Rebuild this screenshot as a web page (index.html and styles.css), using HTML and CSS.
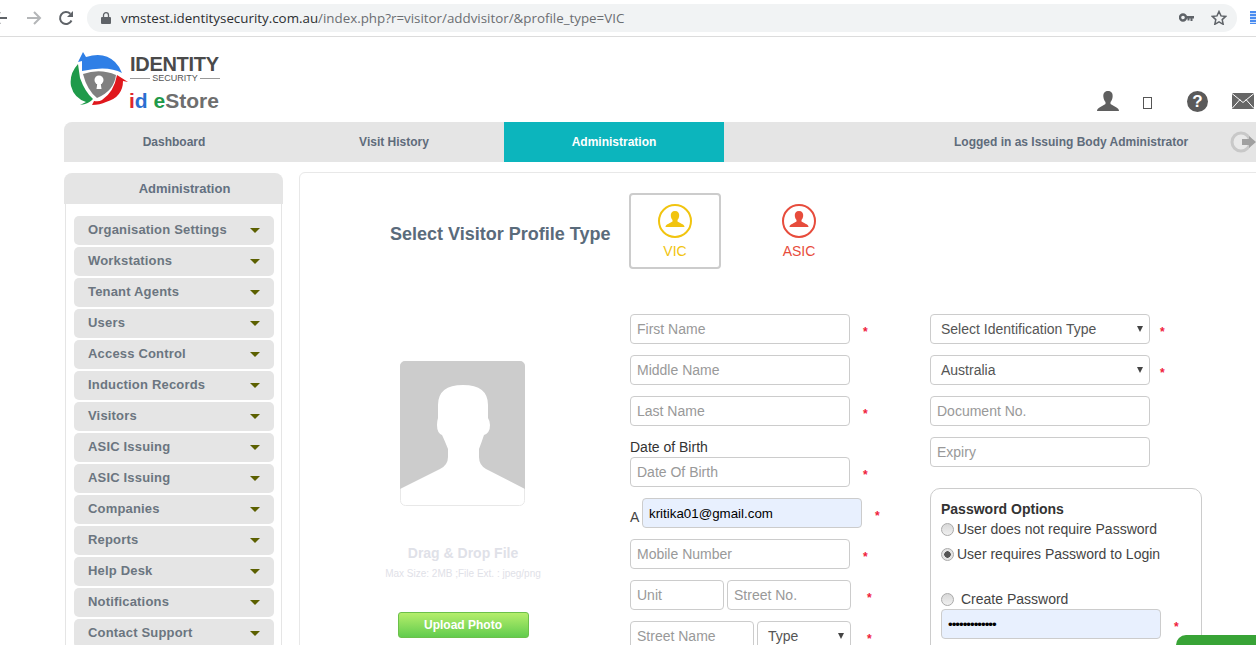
FILE: index.html
```html
<!DOCTYPE html>
<html lang="en">
<head>
  <meta charset="UTF-8">
  <title>Add Visitor</title>
  <link rel="stylesheet" href="styles.css">
</head>
<body>
  <div class="browser-bar">
    <svg class="chrome-icon back" width="16" height="16" viewBox="0 0 16 16"><path d="M15 8H2M8 2L2 8l6 6" fill="none" stroke="#5f6368" stroke-width="2"/></svg>
    <svg class="chrome-icon forward" width="16" height="16" viewBox="0 0 16 16"><path d="M1 8h13M8 2l6 6-6 6" fill="none" stroke="#b4b6b8" stroke-width="2"/></svg>
    <svg class="chrome-icon reload" width="16" height="16" viewBox="0 0 16 16"><path d="M13.500 10.500A6 6 0 1 1 12.300 3.800" fill="none" stroke="#5f6368" stroke-width="2"/><path d="M15 1v6H9z" fill="#5f6368"/></svg>
    <div class="address">
      <svg width="10" height="12" viewBox="0 0 10 12"><path d="M1 5h8a1 1 0 0 1 1 1v5a1 1 0 0 1-1 1H1a1 1 0 0 1-1-1V6a1 1 0 0 1 1-1z" fill="#5f6368"/><path d="M2.500 5V3.200a2.500 2.500 0 0 1 5 0V5" fill="none" stroke="#5f6368" stroke-width="1.300"/></svg>
      <span class="url"><span class="host">vmstest.identitysecurity.com.au</span>/index.php?r=visitor/addvisitor/&amp;profile_type=VIC</span>
      <svg class="key" width="15" height="9" viewBox="0 0 15 9"><circle cx="4" cy="4.500" r="3" fill="none" stroke="#5f6368" stroke-width="2.400"/><path d="M7 3h8v2.500h-1.500V8h-2V5.500h-1V7.500H8.500v-2H7z" fill="#5f6368"/></svg>
      <svg class="star" width="16" height="15" viewBox="0 0 16 15"><path d="M8 1.500l2 4.400 4.700.5-3.500 3.200 1 4.700L8 11.900l-4.200 2.400 1-4.700L1.300 6.400 6 5.900z" fill="none" stroke="#5f6368" stroke-width="1.500"/></svg>
    </div>
    <div class="ext-icon"></div>
  </div>

  <div class="page">
    <header class="top">
      <div class="logo">
        <svg class="logo-mark" width="60" height="56" viewBox="0 0 60 56">
          <path d="M12 19L12 9 8 10 13 0l3 5Q34-1 45 10 50 15 52 21 38 13 12 19z" fill="#2f7fe6"/>
          <path d="M13 22Q30 16 46 23 44 39 27 46 17 38 13 22z" fill="#808080"/>
          <circle cx="29" cy="28" r="4.500" fill="#fff"/>
          <path d="M27.500 30h3l1 7h-5z" fill="#fff"/>
          <path d="M8 12l2 14q5 14 13 21-4 5-13 6l6-3Q4 46 1 34-1 22 8 12z" fill="#1f9a4a"/>
          <path d="M47 23l11 7-5-1q0 16-17 21-6 3-14 3l2-4q5 1 8-1 12-8 15-25z" fill="#e0171c"/>
        </svg>
        <div class="logo-text">
          <div class="logo-name">IDENTITY</div>
          <div class="logo-sub">SECURITY</div>
          <div class="logo-store"><span class="red">i</span><span class="blue">d</span> <span class="green">e</span>Store</div>
        </div>
      </div>
      <div class="top-icons">
        <svg width="22" height="20" viewBox="0 0 22 20"><path d="M11 0c3.500 0 5 2.500 4.600 6-.3 2.500-1.200 4-2.100 5v2l6 3.500c1.500 1 2.500 2 2.500 3.500H0c0-1.500 1-2.500 2.500-3.500l6-3.500v-2C7.600 10 6.700 8.500 6.400 6 6 2.500 7.500 0 11 0z" fill="#5f5f5f"/></svg>
        <span class="tofu"></span>
        <span class="help">?</span>
        <svg class="mail" width="22" height="16" viewBox="0 0 22 16"><rect width="22" height="16" fill="#666"/><path d="M0 .5l11 9 11-9M0 15.500l8-9M22 15.500l-8-9" fill="none" stroke="#fff" stroke-width="1"/></svg>
      </div>
    </header>

    <nav class="tabs">
      <a class="tab">Dashboard</a>
      <a class="tab">Visit History</a>
      <a class="tab active">Administration</a>
      <span class="logged">Logged in as Issuing Body Administrator</span>
      <svg class="logout" width="26" height="22" viewBox="0 0 26 22"><circle cx="11" cy="11" r="9" fill="#e9e9e9" stroke="#c8c8c8" stroke-width="3"/><path d="M12 8h7V5l7 6-7 6v-3h-7z" fill="#a0a0a0"/></svg>
    </nav>

    <div class="content">
      <aside class="sidebar">
        <h3 class="side-head">Administration</h3>
        <ul class="side-menu">
          <li>Organisation Settings</li>
          <li>Workstations</li>
          <li>Tenant Agents</li>
          <li>Users</li>
          <li>Access Control</li>
          <li>Induction Records</li>
          <li>Visitors</li>
          <li>ASIC Issuing</li>
          <li>ASIC Issuing</li>
          <li>Companies</li>
          <li>Reports</li>
          <li>Help Desk</li>
          <li>Notifications</li>
          <li>Contact Support</li>
        </ul>
      </aside>

      <main class="panel">
        <div class="profile-row">
          <h2 class="profile-title">Select Visitor Profile Type</h2>
          <div class="profile-opt selected vic">
            <svg width="36" height="36" viewBox="0 0 36 36"><circle cx="18" cy="18" r="16" fill="none" stroke="currentColor" stroke-width="2"/><path d="M18 8c3 0 4.500 2 4.200 5-.2 2-1 3.200-1.700 4v1.500l4.500 2.500c1.500.8 2.500 1.700 2.500 3H8.500c0-1.300 1-2.200 2.500-3l4.500-2.500V17c-.7-.8-1.500-2-1.700-4C13.500 10 15 8 18 8z" fill="currentColor"/></svg>
            <span>VIC</span>
          </div>
          <div class="profile-opt asic">
            <svg width="36" height="36" viewBox="0 0 36 36"><circle cx="18" cy="18" r="16" fill="none" stroke="currentColor" stroke-width="2"/><path d="M18 8c3 0 4.500 2 4.200 5-.2 2-1 3.200-1.700 4v1.500l4.500 2.500c1.500.8 2.500 1.700 2.500 3H8.500c0-1.300 1-2.200 2.500-3l4.500-2.500V17c-.7-.8-1.500-2-1.700-4C13.500 10 15 8 18 8z" fill="currentColor"/></svg>
            <span>ASIC</span>
          </div>
        </div>

        <div class="form-area">
          <div class="photo-col">
            <svg class="photo" width="125" height="145" viewBox="0 0 125 145">
              <rect x=".5" y=".5" width="124" height="144" rx="5" fill="#fff" stroke="#e8e8e8"/>
              <path d="M0 128V5a5 5 0 0 1 5-5h115a5 5 0 0 1 5 5v123l-39-20q-7-4-7-12v-8q3-8 5-14 6-2 6-10 0-4-2-7V44q0-20-25-20T38 44v13q-1 3-1 7 0 8 5 10 2 4 6 14v8q0 8-8 12z" fill="#cccccc"/>
            </svg>
            <div class="drop-title">Drag &amp; Drop File</div>
            <div class="drop-note">Max Size: 2MB ;File Ext. : jpeg/png</div>
            <button class="upload">Upload Photo</button>
          </div>

          <div class="col-one">
            <div class="row"><input class="w220" placeholder="First Name"><span class="req">*</span></div>
            <div class="row"><input class="w220" placeholder="Middle Name"></div>
            <div class="row"><input class="w220" placeholder="Last Name"><span class="req">*</span></div>
            <label class="dob-label">Date of Birth</label>
            <div class="row"><input class="w220" placeholder="Date Of Birth"><span class="req">*</span></div>
            <div class="row"><span class="email-a">A</span><input class="w220 filled" value="kritika01@gmail.com"><span class="req">*</span></div>
            <div class="row"><input class="w220" placeholder="Mobile Number"><span class="req">*</span></div>
            <div class="row tight">
              <input class="w94" placeholder="Unit">
              <input class="w124" placeholder="Street No.">
              <span class="req">*</span>
            </div>
            <div class="row tight">
              <input class="w124" placeholder="Street Name">
              <div class="select w94"><span>Type</span></div>
              <span class="req">*</span>
            </div>
          </div>

          <div class="col-two">
            <div class="row"><div class="select w220"><span>Select Identification Type</span></div><span class="req near">*</span></div>
            <div class="row"><div class="select w220"><span>Australia</span></div><span class="req near">*</span></div>
            <div class="row"><input class="w220" placeholder="Document No."></div>
            <div class="row"><input class="w220" placeholder="Expiry"></div>
            <section class="pass-box">
              <h4>Password Options</h4>
              <label class="radio-row"><input type="radio" name="pw">User does not require Password</label>
              <label class="radio-row second"><input type="radio" name="pw" checked>User requires Password to Login</label>
              <label class="radio-row create"><input type="radio" name="pw2">Create Password</label>
              <div class="row"><input class="w220 filled pass" type="password" value="abcdefghijklm"><span class="req">*</span></div>
            </section>
          </div>
        </div>
      </main>
    </div>
  </div>

  <div class="chat-chip"></div>
</body>
</html>
```

FILE: styles.css
```css
html, body {
  margin: 0;
  height: 645px;
  overflow: hidden;
  background: #fff;
  font-family: "Liberation Sans", Arial, sans-serif;
  font-size: 14px;
  color: #333;
}
* {
  box-sizing: border-box;
}

/* browser toolbar */
.browser-bar {
  display: flex;
  align-items: center;
  height: 37px;
  border-bottom: 1px solid #dcdcdc;
  padding-bottom: 1px;
}
.chrome-icon {
  flex: none;
}
.back {
  margin-left: -8px;
}
.forward {
  margin-left: 18px;
}
.reload {
  margin-left: 16px;
}
.address {
  display: flex;
  align-items: center;
  flex: none;
  width: 1150px;
  height: 28px;
  margin-left: 13px;
  padding: 0 10px 0 14px;
  border-radius: 14px;
  background: #f1f3f4;
}
.url {
  flex: 1;
  margin-left: 10px;
  font-family: "Open Sans", sans-serif;
  font-size: 13.350px;
  color: #6b6e72;
  white-space: nowrap;
}
.host {
  color: #2c2e31;
}
.key {
  margin-right: 17px;
}
.ext-icon {
  flex: none;
  width: 8px;
  height: 13px;
  margin-left: 13px;
  background: repeating-linear-gradient(#4a8cf0 0 2px, #cfe0fb 2px 3px);
}

.page {
  margin-left: 64px;
}

/* header */
.top {
  display: flex;
  justify-content: space-between;
  align-items: flex-end;
  height: 85px;
  padding-bottom: 10px;
}
.logo {
  display: flex;
  align-self: flex-start;
  margin: 15px 0 0 6px;
}
.logo-text {
  margin: 3px 0 0 0;
  color: #4a4a4a;
}
.logo-name {
  width: 90px;
  font-size: 20px;
  line-height: 18px;
  font-weight: bold;
  letter-spacing: -.3px;
  white-space: nowrap;
}
.logo-sub {
  display: flex;
  align-items: center;
  gap: 2px;
  width: 90px;
  font-size: 9px;
  line-height: 11px;
  color: #555;
}
.logo-sub::before, .logo-sub::after {
  content: "";
  flex: 1;
  border-top: 1px solid #999;
}
.logo-store {
  margin: 5px 0 0 -1px;
  font-size: 21px;
  line-height: 24px;
  font-weight: bold;
  color: #6e6e6e;
  white-space: nowrap;
}
.red {
  color: #e0262b;
}
.blue {
  color: #2b6fd0;
}
.green {
  color: #1f9a4a;
}
.top-icons {
  display: flex;
  align-items: center;
  margin-left: auto;
  width: 159px;
  height: 22px;
}
.tofu {
  width: 9px;
  height: 12px;
  margin: 3px 0 0 24px;
  border: 1px solid #555;
}
.help {
  width: 21px;
  height: 21px;
  margin-left: 35px;
  border-radius: 50%;
  background: #5a5a5a;
  color: #fff;
  font-size: 17px;
  line-height: 21px;
  font-weight: bold;
  text-align: center;
}
.mail {
  margin-left: 24px;
  flex: none;
}

/* nav */
.tabs {
  display: flex;
  align-items: center;
  height: 40px;
  border-radius: 8px 0 0 0;
  background: #e5e5e5;
  font-size: 12px;
  font-weight: bold;
  color: #5f6c7b;
}
.tab {
  display: flex;
  flex: none;
  align-items: center;
  justify-content: center;
  width: 220px;
  height: 100%;
}
.tab.active {
  background: #0cb5bd;
  color: #fff;
}
.logged {
  flex: none;
  margin-left: 230px;
  white-space: nowrap;
}
.logout {
  margin-left: 42px;
  flex: none;
}

/* sidebar */
.content {
  display: flex;
  gap: 16px;
  margin-top: 10px;
}
.sidebar {
  flex: none;
  width: 219px;
  margin-top: 1px;
}
.side-head {
  height: 31px;
  margin: 0;
  padding-left: 22px;
  border-radius: 8px 8px 0 0;
  background: #e5e5e5;
  font-size: 13px;
  line-height: 31px;
  font-weight: bold;
  text-align: center;
  color: #637081;
}
.side-menu {
  margin: 0 1px;
  padding: 12px 7px 0 8px;
  border: 1px solid #e5e5e5;
  border-top: 0;
  list-style: none;
}
.side-menu li {
  position: relative;
  height: 29px;
  margin-bottom: 2px;
  padding-left: 14px;
  border-radius: 5px;
  background: #e5e5e5;
  font-size: 13px;
  line-height: 28px;
  font-weight: bold;
  letter-spacing: .18px;
  color: #6b7580;
}
.side-menu li::after {
  content: "";
  position: absolute;
  right: 14px;
  top: 12px;
  border-style: solid;
  border-width: 5px 5.500px 0;
  border-color: #5c6000 transparent transparent;
}

/* main panel */
.panel {
  flex: none;
  width: 1000px;
  height: 600px;
  padding-top: 20px;
  border: 1px solid #e8e8e8;
  border-radius: 6px;
}
.profile-row {
  display: flex;
  align-items: center;
  padding-left: 90px;
}
.profile-title {
  width: 239px;
  margin: 6px 0 0;
  font-size: 18px;
  font-weight: bold;
  color: #5a6b7b;
  white-space: nowrap;
}
.profile-opt {
  display: flex;
  flex-direction: column;
  align-items: center;
  width: 92px;
  height: 76px;
  padding-top: 10px;
  font-size: 14px;
}
.profile-opt span {
  margin-top: 4px;
}
.profile-opt.selected {
  border: 2px solid #ccc;
  border-radius: 4px;
  padding-top: 8px;
  margin-right: 32px;
}
.vic {
  color: #f1c40f;
}
.asic {
  color: #e74c3c;
}

.form-area {
  display: flex;
  margin-top: 45px;
}
.photo-col {
  flex: none;
  display: flex;
  flex-direction: column;
  align-items: center;
  width: 156px;
  margin-left: 85px;
  padding-top: 47px;
}
.photo {
  display: block;
  margin-right: 1px;
}
.drop-title {
  margin-top: 39px;
  font-size: 14px;
  line-height: 16px;
  font-weight: bold;
  color: #dfe1e8;
}
.drop-note {
  margin-top: 7px;
  font-size: 10px;
  line-height: 12px;
  color: #dfe1e8;
  white-space: nowrap;
}
.upload {
  flex: none;
  width: 131px;
  height: 26px;
  margin-top: 32px;
  border: 1px solid #6cc04a;
  border-radius: 3px;
  background: linear-gradient(#b5ee6b, #62cc4e);
  color: #fff;
  font-family: inherit;
  font-size: 12px;
  font-weight: bold;
}

/* form */
.col-one {
  flex: none;
  width: 300px;
  margin-left: 89px;
}
.col-two {
  flex: none;
  width: 300px;
}
.row {
  display: flex;
  align-items: center;
  height: 30px;
  margin-bottom: 11px;
}
.row.tight {
  gap: 3px;
}
input:not([type=radio]), .select {
  height: 30px;
  padding: 0 6px;
  border: 1px solid #ccc;
  border-radius: 4px;
  background: #fff;
  font-family: inherit;
  font-size: 14px;
  color: #333;
}
input::placeholder {
  color: #999;
  opacity: 1;
}
.w220 {
  width: 220px;
}
.w124 {
  width: 124px;
}
.w94 {
  width: 94px;
}
input.filled {
  background: #e8f0fe;
  color: #000;
  font-size: 13.330px;
}
.select {
  position: relative;
  flex: none;
  padding-left: 10px;
  line-height: 28px;
  color: #555;
}
.select::after {
  content: "";
  position: absolute;
  right: 6px;
  top: 11px;
  border-style: solid;
  border-width: 6px 3.500px 0;
  border-color: #444 transparent transparent;
}
.req {
  margin: 6px 0 0 13px;
  font-size: 12px;
  font-weight: bold;
  color: #f0203c;
}
.req.near {
  margin-left: 10px;
}
.tight .req {
  margin-left: 13px;
}
.dob-label {
  display: block;
  height: 20px;
  line-height: 21px;
  color: #333;
}
.email-a {
  width: 12px;
  margin-top: 7px;
  color: #444;
}
.pass-box {
  width: 272px;
  height: 200px;
  margin-top: 21px;
  padding: 12px 10px;
  border: 1px solid #ccc;
  border-radius: 10px;
}
.pass-box h4 {
  margin: 0;
  font-size: 14px;
  line-height: 17px;
  font-weight: bold;
}
.radio-row {
  display: flex;
  align-items: center;
  height: 20px;
  margin-top: 1px;
  color: #444;
}
.radio-row input {
  appearance: none;
  width: 13px;
  height: 13px;
  margin: 0 3px 0 0;
  border: 1px solid #aaa;
  border-radius: 50%;
  background: linear-gradient(#d8d8d8, #f0f0f0);
}
.radio-row input:checked {
  background: radial-gradient(circle, #555 0 3px, #e4e4e4 3.500px);
}
.radio-row.second {
  margin-top: 5px;
}
.radio-row.create {
  margin-top: 25px;
}
.create input {
  margin-right: 7px;
}
.pass {
  letter-spacing: -1px;
}

.chat-chip {
  position: absolute;
  left: 1176px;
  top: 635px;
  width: 120px;
  height: 10px;
  border-radius: 22px 0 0 0 / 22px 0 0 0;
  background: #38a336;
}
```
